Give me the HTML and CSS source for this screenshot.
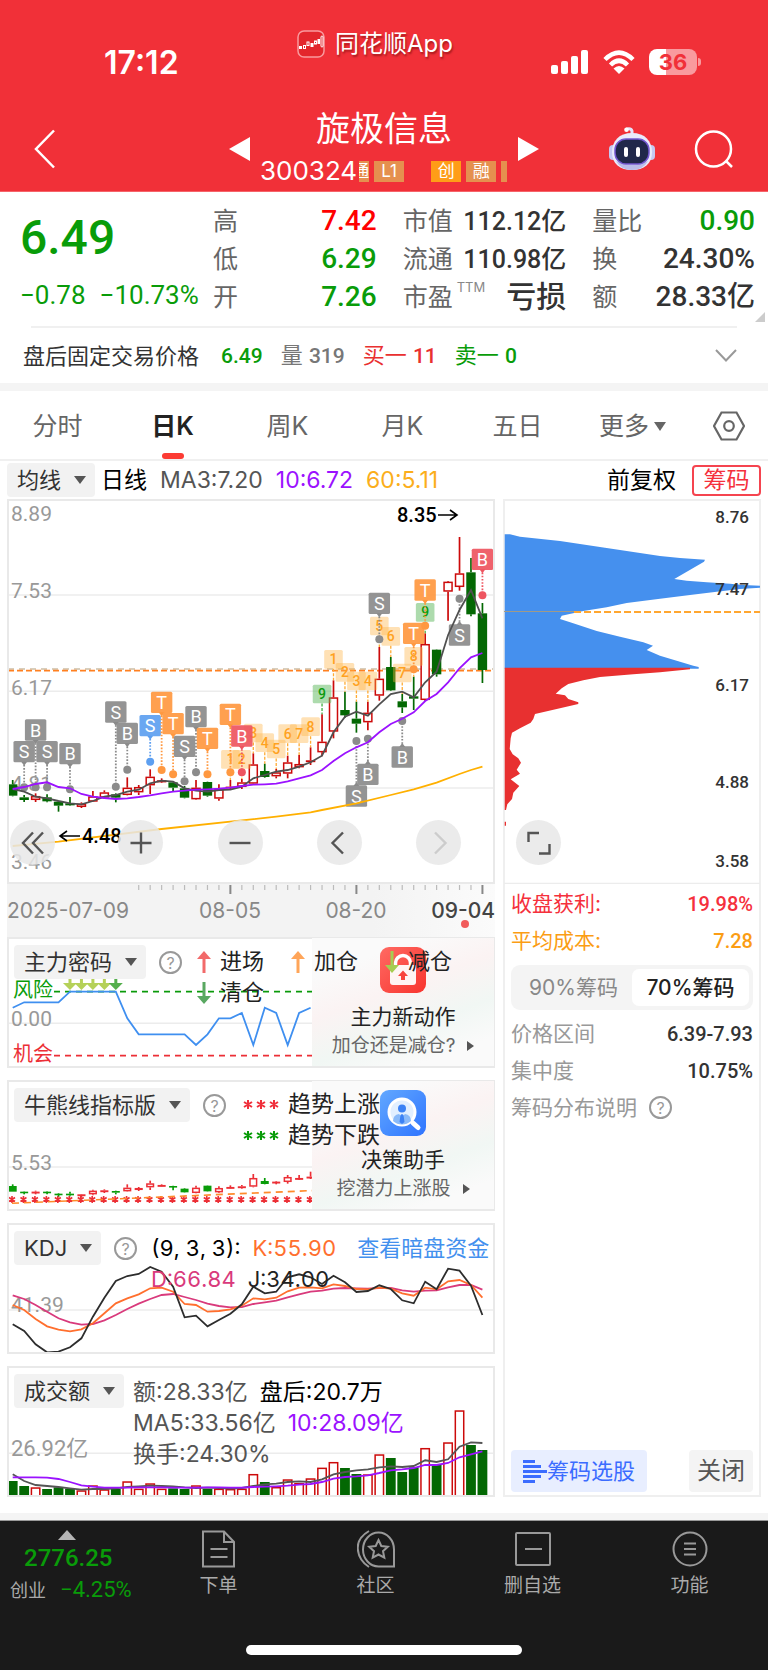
FILE: index.html
```html
<!DOCTYPE html>
<html lang="zh-CN">
<head>
<meta charset="utf-8">
<meta name="viewport" content="width=device-width, initial-scale=1">
<title>旋极信息 300324</title>
<link rel="stylesheet" href="styles.css">
</head>
<body>
<header class="top">
  <div class="status">
    <span class="clock">17:12</span>
    <span class="app">
      <svg class="app-logo" viewBox="0 0 28 28" aria-hidden="true"><rect x="1" y="1" width="26" height="26" rx="6" fill="#e3262c" stroke="#f99a9d" stroke-width="1.5"/><g fill="none" stroke="#fff" stroke-width="1"><rect x="2.500" y="16.500" width="2" height="2" fill="#fff"/><rect x="6.500" y="15.500" width="2" height="3"/><rect x="10" y="12" width="2" height="3.500"/><rect x="14" y="13.500" width="2" height="3" fill="#fff"/><rect x="17.500" y="11" width="2" height="3"/><rect x="21" y="9.500" width="1.500" height="4" fill="#fff"/><rect x="24" y="6" width="2" height="11" rx="1"/></g></svg>
      同花顺App
    </span>
    <span class="signals">
      <svg width="38" height="24" viewBox="0 0 38 24" fill="#fff" aria-hidden="true"><rect x="0" y="15" width="7" height="9" rx="2"/><rect x="10" y="11" width="7" height="13" rx="2"/><rect x="20" y="6" width="7" height="18" rx="2"/><rect x="30" y="0" width="7" height="24" rx="2"/></svg>
      <svg width="32" height="24" viewBox="0 0 32 24" aria-hidden="true"><g fill="none" stroke="#fff" stroke-width="4.500"><path d="M2 9.500Q16-4.500 30 9.500"/><path d="M7.500 15Q16 6.500 24.500 15"/></g><path d="M10.500 18.500Q16 13.500 21.500 18.500L16 24Z" fill="#fff"/></svg>
      <span class="battery">36</span>
    </span>
  </div>
  <div class="bar">
    <button class="plain back" aria-label="返回"><svg width="22" height="40" viewBox="0 0 22 40"><path d="M20 1.500 2 20l18 18.500" fill="none" stroke="#fff" stroke-width="2.500"/></svg></button>
    <div class="stock">
      <button class="plain" aria-label="上一只"><svg width="21" height="24" viewBox="0 0 21 24"><path d="M21 0v24L0 12z" fill="#fff"/></svg></button>
      <div class="ident">
        <h1>旋极信息</h1>
        <div class="code"><span>300324</span><span class="tags"><i class="tag cut-left">通</i><i class="tag">L1</i><i class="tag hot">创</i><i class="tag">融</i><i class="tag cut-right"></i></span></div>
      </div>
      <button class="plain" aria-label="下一只"><svg width="21" height="24" viewBox="0 0 21 24"><path d="M0 0v24l21-12z" fill="#fff"/></svg></button>
    </div>
    <div class="tools">
      <button class="plain" aria-label="智能助手"><svg width="46" height="44" viewBox="0 0 46 44"><path d="M23 8V4q-1-3-5-2" fill="none" stroke="#e4e4fa" stroke-width="3" stroke-linecap="round"/><circle cx="17.500" cy="2.800" r="2.300" fill="#fff"/><rect x="0" y="18" width="8" height="15" rx="4" fill="#c5c8f2"/><rect x="38" y="18" width="8" height="15" rx="4" fill="#c5c8f2"/><path d="M23 6C36 6 43 14 43 25c0 12-8 18-20 18S3 37 3 25C3 14 10 6 23 6Z" fill="#e9eafa"/><path d="M7 34q15 8 32 0-5 9-16 9T7 34Z" fill="#bbbde9"/><rect x="6" y="12" width="34" height="25" rx="11" fill="#20284a" stroke="#7357cf" stroke-width="1.500"/><rect x="15" y="20" width="4" height="10" rx="2" fill="#fff"/><rect x="27" y="20" width="4" height="10" rx="2" fill="#fff"/></svg></button>
      <button class="plain" aria-label="搜索"><svg width="40" height="40" viewBox="0 0 40 40" fill="none" stroke="#fff" stroke-width="2.500"><circle cx="19.500" cy="20" r="17.500"/><path d="m32 32 6 6"/></svg></button>
    </div>
  </div>
</header>

<main>
  <section class="quote">
    <div class="price"><strong>6.49</strong><span>−0.78</span><span>−10.73%</span></div>
    <dl class="stats">
      <div><dt>高</dt><dd class="up">7.42</dd></div>
      <div><dt>市值</dt><dd class="long">112.12亿</dd></div>
      <div><dt>量比</dt><dd class="down">0.90</dd></div>
      <div><dt>低</dt><dd class="down">6.29</dd></div>
      <div><dt>流通</dt><dd class="long">110.98亿</dd></div>
      <div><dt>换</dt><dd>24.30%</dd></div>
      <div><dt>开</dt><dd class="down">7.26</dd></div>
      <div><dt>市盈<sup>TTM</sup></dt><dd class="word">亏损</dd></div>
      <div><dt>额</dt><dd>28.33亿</dd></div>
    </dl>
    <span class="corner"></span>
  </section>
  <section class="after">
    <span>盘后固定交易价格</span><b class="down">6.49</b><span class="grey">量 <b>319</b></span><span class="buy">买一 <b>11</b></span><span class="down">卖一 <b>0</b></span>
    <button class="plain" aria-label="展开"><svg width="22" height="13" viewBox="0 0 22 13"><path d="m1 1 10 10.500L21 1" fill="none" stroke="#999" stroke-width="2"/></svg></button>
  </section>

  <nav class="tabs">
    <button class="plain">分时</button>
    <button class="plain active">日K</button>
    <button class="plain">周K</button>
    <button class="plain">月K</button>
    <button class="plain">五日</button>
    <button class="plain more">更多</button>
    <button class="plain" aria-label="设置"><svg width="32" height="30" viewBox="0 0 32 30" fill="none" stroke="#666" stroke-width="2.200"><path d="M8.500 1.500h15L31 15l-7.500 13.500h-15L1 15Z"/><circle cx="16" cy="15" r="4.800"/></svg></button>
  </nav>

  <div class="legend-bar">
    <label class="pick"><select aria-label="主图指标"><option>均线</option></select></label>
    <span class="black">日线</span><span class="ma3">MA3:7.20</span><span class="ma10">10:6.72</span><span class="ma60">60:5.11</span>
    <span class="black adj">前复权</span>
    <button class="chip-btn">筹码</button>
  </div>

  <div class="board">
    <div class="left">
      <div class="chart frame">
        <svg id="kline" viewBox="7 499 488 385" role="img" aria-label="日K线"></svg>
        <div class="round-row">
          <button class="round" aria-label="最左"><svg viewBox="0 0 24 24"><path d="M12 1.500 2 12l10 10.500M22 1.500 12 12l10 10.500"/></svg></button>
          <button class="round" aria-label="放大"><svg viewBox="0 0 24 24"><path d="M12 1.500v21M1.500 12h21"/></svg></button>
          <button class="round" aria-label="缩小"><svg viewBox="0 0 24 24"><path d="M1.500 12h21"/></svg></button>
          <button class="round" aria-label="左移"><svg viewBox="0 0 24 24"><path d="M16 1.500 5.500 12 16 22.500"/></svg></button>
          <button class="round off" aria-label="右移" disabled><svg viewBox="0 0 24 24"><path d="M8 1.500 18.500 12 8 22.500"/></svg></button>
        </div>
      </div>
      <svg id="dates" class="dates" viewBox="7 884 488 53" role="img" aria-label="日期轴"></svg>

      <section class="panel frame">
        <svg id="code" viewBox="7 938 488 131" role="img" aria-label="主力密码"></svg>
        <div class="panel-head">
          <label class="pick"><select aria-label="副图指标一"><option>主力密码</option></select></label>
          <button class="plain help" aria-label="说明">?</button>
          <div class="legend arrows">
            <span><svg viewBox="0 0 14 22"><path d="M5.500 22V8H0L7 0l7 8H8.500V22Z" fill="#f26a6a"/></svg>进场</span>
            <span><svg viewBox="0 0 14 22"><path d="M5.500 22V8H0L7 0l7 8H8.500V22Z" fill="#ffa559"/></svg>加仓</span>
            <span><svg viewBox="0 0 14 22"><path d="M5.500 0V14H0L7 22l7-8H8.500V0Z" fill="#a6cd52"/></svg>减仓</span>
            <span><svg viewBox="0 0 14 22"><path d="M5.500 0V14H0L7 22l7-8H8.500V0Z" fill="#59a861"/></svg>清仓</span>
          </div>
        </div>
        <a class="promo" href="#action">
          <svg class="promo-icon" viewBox="0 0 46 46"><defs><linearGradient id="r" x1="0" y1="0" x2="1" y2="1"><stop stop-color="#ff6a63"/><stop offset="1" stop-color="#f8342e"/></linearGradient></defs><rect width="46" height="46" rx="9" fill="url(#r)"/><path d="M15.500 19v-3a7.500 7.500 0 0 1 15 0v3" fill="none" stroke="#fff" stroke-width="3.500"/><path d="M10 18h26v17q0 3-3 3H13q-3 0-3-3Z" fill="#fff" opacity=".94"/><path d="M23 23.500 28 29h-3v4h-4v-4h-3Z" fill="#f8433d"/></svg>
          <b>主力新动作</b><span>加仓还是减仓?<i class="play"></i></span>
        </a>
      </section>

      <section class="panel frame">
        <svg id="trend" viewBox="7 1080 488 131" role="img" aria-label="牛熊线"></svg>
        <div class="panel-head">
          <label class="pick"><select aria-label="副图指标二"><option>牛熊线指标版</option></select></label>
          <button class="plain help" aria-label="说明">?</button>
          <div class="legend stars">
            <span><svg class="rise" viewBox="0 0 34 9"><path d="M4 0v9M0 2l8 5M8 2l-8 5M17 0v9M13 2l8 5M21 2l-8 5M30 0v9M26 2l8 5M34 2l-8 5"/></svg>趋势上涨</span>
            <span><svg class="fall" viewBox="0 0 34 9"><path d="M4 0v9M0 2l8 5M8 2l-8 5M17 0v9M13 2l8 5M21 2l-8 5M30 0v9M26 2l8 5M34 2l-8 5"/></svg>趋势下跌</span>
          </div>
        </div>
        <a class="promo" href="#assistant">
          <svg class="promo-icon" viewBox="0 0 46 46"><defs><linearGradient id="b" x1="0" y1="0" x2="1" y2="1"><stop stop-color="#62a8ff"/><stop offset="1" stop-color="#2f74ff"/></linearGradient></defs><rect width="46" height="46" rx="9" fill="url(#b)"/><path d="m33 33 5 4.500" stroke="#fff" stroke-width="5" stroke-linecap="round"/><circle cx="22" cy="22" r="13" fill="#e2efff" stroke="#fff" stroke-width="3"/><circle cx="22" cy="18.500" r="4" fill="#3c82f5"/><path d="M13 31q0-6 6-7l3 3 3-3q6 1 6 7-4 3.500-9 3.500T13 31Z" fill="#8abaf9"/><path d="m20.500 25 1.500-1 1.500 1 1 7-2.500 2-2.500-2Z" fill="#3c82f5"/></svg>
          <b>决策助手</b><span>挖潜力上涨股<i class="play"></i></span>
        </a>
      </section>

      <section class="panel frame">
        <svg id="kdj" viewBox="7 1223 488 131" role="img" aria-label="KDJ"></svg>
        <div class="panel-head">
          <label class="pick"><select aria-label="副图指标三"><option>KDJ</option></select></label>
          <button class="plain help" aria-label="说明">?</button>
          <div class="legend values">
            <span class="black">(9, 3, 3):</span><span class="k">K:55.90</span><a href="#fund">查看暗盘资金</a>
            <span class="d">D:66.84</span><span class="ink">J:34.00</span>
          </div>
        </div>
      </section>

      <section class="panel frame">
        <svg id="volume" viewBox="7 1365 488 131" role="img" aria-label="成交额"></svg>
        <div class="panel-head">
          <label class="pick"><select aria-label="副图指标四"><option>成交额</option></select></label>
          <div class="legend amounts">
            <p><span>额:28.33亿</span><span class="black">盘后:20.7万</span></p>
            <p><span>MA5:33.56亿</span><span class="ma10">10:28.09亿</span></p>
            <p><span>换手:24.30%</span></p>
          </div>
        </div>
      </section>
    </div>

    <aside class="chips">
      <div class="chart">
        <svg id="dist" viewBox="503 499 258 385" role="img" aria-label="筹码分布"></svg>
        <button class="round full" aria-label="全屏"><svg viewBox="0 0 24 24"><path d="M1.500 11V2H12M12 22.500h10.500V13"/></svg></button>
      </div>
      <div class="chip-info">
        <p class="gain"><span>收盘获利:</span><b>19.98%</b></p>
        <p class="cost"><span>平均成本:</span><b>7.28</b></p>
        <div class="segment">
          <label><input type="radio" name="range"><span>90%筹码</span></label>
          <label><input type="radio" name="range" checked><span>70%筹码</span></label>
        </div>
        <p><span>价格区间</span><b>6.39-7.93</b></p>
        <p><span>集中度</span><b>10.75%</b></p>
        <p class="note"><span>筹码分布说明</span><button class="plain help" aria-label="筹码分布说明">?</button></p>
      </div>
      <div class="chip-actions">
        <button class="choose"><svg width="24" height="23" viewBox="0 0 24 23"><path d="M0 1.500h12M0 6.500h18M0 11.500h24M0 16.500h18M0 21.500h12" stroke="#3b6cff" stroke-width="2.800"/></svg>筹码选股</button>
        <button class="close">关闭</button>
      </div>
    </aside>
  </div>
</main>

<footer class="dock">
  <nav class="dock-row">
    <a class="index" href="#index"><i class="tri"></i><b>2776.25</b><span>创业 <em>−4.25%</em></span></a>
    <a href="#order"><svg viewBox="0 0 38 38"><path d="M3 1.500h21L34 12v24.500H3ZM24 1.500V12h10M10.500 19h17M10.500 27h17"/></svg>下单</a>
    <a href="#club"><svg viewBox="0 0 38 38"><path d="M37 36.500V19.500A15.500 17 0 1 0 21.500 36.500ZM12 1Q0 8 .800 19T12 37M21.500 10l2.800 6 6.500.800-4.800 4.400 1.300 6.500-5.800-3.200-5.800 3.200 1.300-6.500-4.800-4.400 6.500-.800Z"/></svg>社区</a>
    <a href="#remove"><svg viewBox="0 0 38 38"><rect x="2" y="3" width="34" height="32" rx="1"/><path d="M11 19h17"/></svg>删自选</a>
    <a href="#more"><svg viewBox="0 0 38 38"><circle cx="19" cy="19" r="16.500"/><path d="M13 13.500h12M13 19h12M13 24.500h12"/></svg>功能</a>
  </nav>
  <i class="home"></i>
</footer>
<script src="charts.js"></script>
</body>
</html>
```

FILE: styles.css
```css
* { box-sizing: border-box; }
body {
  margin: 0;
  background: #fff;
  color: #333;
  font-family: Inter, "Noto Sans CJK SC", sans-serif;
  font-size: 22px;
  line-height: 1;
}
h1, p, dl, dd { margin: 0; }
i, em { font-style: normal; }
a { text-decoration: none; color: inherit; }
button, select, input { font: inherit; color: inherit; }
.plain { border: 0; padding: 0; background: none; display: inline-flex; align-items: center; justify-content: center; }
svg { display: block; }
.up { color: #f00; }
.down { color: #099c09; }

/* header */
.top { background: #f13038; color: #fff; border-bottom: 1px solid #f6646a; }
.status { display: grid; grid-template-columns: 1fr auto 1fr; height: 96px; padding: 26px 71px 0; }
.clock { font-size: 32px; font-weight: 600; line-height: 74px; padding-left: 33px; }
.app { display: flex; gap: 10px; align-items: center; height: 36px; font-size: 24px; text-shadow: 1px 2px 2px rgba(90, 0, 0, .5); margin-right: 18px; }
.app-logo { width: 28px; height: 28px; }
.signals { display: flex; gap: 14px; justify-content: flex-end; align-items: center; height: 72px; }
.battery { position: relative; width: 48px; height: 26px; border-radius: 8px; background: linear-gradient(90deg, #fff 36%, #f99a9e 36%); color: #f13038; font-size: 22px; font-weight: 700; line-height: 26px; text-align: center; }
.battery::after { content: ""; position: absolute; right: -4px; top: 9px; width: 3px; height: 8px; border-radius: 0 3px 3px 0; background: #f99a9e; }
.bar { display: grid; grid-template-columns: 1fr auto 1fr; height: 95px; padding: 0 34px; }
.back { justify-self: start; height: 105px; }
.stock { display: flex; align-items: center; gap: 10px; height: 105px; }
.ident { width: 248px; align-self: start; padding-top: 14px; }
h1 { font-size: 34px; font-weight: 400; line-height: 38px; margin-bottom: 9px; text-align: center; }
.code { display: flex; align-items: center; font-size: 26px; line-height: 28px; overflow: hidden; }
.tags { display: flex; gap: 5px; flex: 1; margin-left: 2px; }
.tag { width: 30px; height: 21px; flex: none; background: #e5904f; font-size: 17px; line-height: 21px; text-align: center; }
.cut-left { width: 10px; overflow: hidden; direction: rtl; }
.hot { background: #ff9d17; margin-left: 22px; }
.cut-right { width: 6px; }
.tools { display: flex; gap: 39px; justify-content: flex-end; height: 105px; align-items: center; }

/* quote */
.quote { position: relative; display: grid; grid-template-columns: 193px 1fr; margin: 0 13px 0 20px; padding-top: 10px; height: 134px; }
.price { display: flex; flex-wrap: wrap; align-content: flex-start; column-gap: 14px; color: #099c09; font-family: Roboto, sans-serif; font-size: 26px; }
.price span { white-space: nowrap; line-height: 30px; }
.price strong { flex: 0 0 100%; font-size: 48px; font-weight: 500; line-height: 72px; margin-bottom: 6px; }
.stats { display: grid; grid-template-columns: 163fr 163fr 162fr; column-gap: 26px; grid-auto-rows: 38px; }
.stats div { display: flex; justify-content: space-between; align-items: center; font-size: 25px; }
dt { color: #666; position: relative; white-space: nowrap; }
dt sup { position: absolute; left: 54px; top: -4px; font-size: 13px; line-height: 13px; color: #888; }
dd { font-family: Roboto, "Noto Sans CJK SC", sans-serif; font-weight: 500; font-size: 28px; white-space: nowrap; }
dd.long { font-size: 25px; }
dd.word { font-size: 30px; }
.corner { position: absolute; right: -10px; bottom: 4px; border-style: solid; border-width: 0 0 10px 10px; border-color: transparent transparent #ccc transparent; }
.after { display: flex; align-items: center; gap: 18px; height: 57px; margin: 0 31px; border-top: 2px solid #f0f0f0; font-size: 22px; white-space: nowrap; }
.after > span:first-child { margin: 0 4px 0 -8px; }
.after b { font: 500 21px Roboto, sans-serif; }
.after button { margin-left: auto; }
.grey { color: #777; }
.buy { color: #e93030; }

/* tabs */
.tabs { display: grid; grid-template-columns: repeat(6, 115fr) 78fr; height: 78px; border-top: 8px solid #f4f4f4; border-bottom: 2px solid #f0f0f0; color: #666; font-size: 25px; }
.tabs button { position: relative; padding-top: 2px; }
.tabs .active { color: #222; font-weight: 600; }
.active::after { content: ""; position: absolute; bottom: 0; width: 22px; height: 6px; border-radius: 3px; background: #fc3b33; }
.more { gap: 5px; }
.more::after { content: ""; border: 6px solid transparent; border-top: 9px solid #666; border-bottom: 0; }

/* dropdown */
.pick { position: relative; display: inline-block; flex: none; }
.pick select { appearance: none; border: 0; margin: 0; height: 34px; padding: 0 33px 0 10px; border-radius: 4px; background: #f2f2f2; font-size: 22px; line-height: 34px; color: #333; display: block; }
.pick::after { content: ""; position: absolute; right: 9px; top: 13px; border: 6px solid transparent; border-top: 8px solid #555; border-bottom: 0; pointer-events: none; }
.values { font-variant-numeric: tabular-nums; }
.legend-bar { display: flex; align-items: center; gap: 13px; padding: 0 7px; height: 38px; font-size: 23px; white-space: nowrap; }
.legend-bar .pick { margin-right: -7px; }
.ink { color: #222; }
.black { color: #000; }
.ma3 { color: #555; }
.ma10 { color: #9b12ff; }
.ma60 { color: #fbae1b; }
.adj { margin: 0 3px 0 auto; }
.chip-btn { border: 2px solid #f5444f; border-radius: 4px; background: #fff; color: #f5303c; width: 69px; height: 31px; padding: 0; line-height: 27px; }

/* board */
.board { display: grid; grid-template-columns: 488fr 258fr; gap: 8px; padding: 0 7px 16px; border-bottom: 7px solid #f4f4f4; }
.board svg text { font-family: Roboto, "Noto Sans CJK SC", sans-serif; }
.frame { position: relative; outline: 2px solid #e9e9e9; outline-offset: -2px; }
.chart { position: relative; }
.chart > svg, .panel > svg, .dates { width: 100%; }
.dates { background: linear-gradient(90deg, #f3f3f3 75%, #fbfbfb); }
.round-row { position: absolute; left: 3px; right: 34px; bottom: 19px; display: flex; justify-content: space-between; }
.round { width: 45px; height: 45px; border: 0; border-radius: 50%; padding: 0; display: flex; align-items: center; justify-content: center; background: rgba(232, 232, 232, .85); }
.round:nth-child(2) { margin-left: 9px; }
.round svg { width: 24px; height: 24px; fill: none; stroke: #555; stroke-width: 2.4; }
.round.off svg { stroke: #ccc; }
.chart .full { position: absolute; left: 13px; bottom: 19px; margin: 0; }
.panel { margin-bottom: 12px; }
.panel:last-child { margin-bottom: 0; }
.panel-head { position: absolute; z-index: 2; left: 7px; right: 0; top: 8px; display: flex; align-items: flex-start; pointer-events: none; }
.help { width: 23px; height: 23px; border: 2px solid #999; border-radius: 50%; color: #999; font-size: 16px; flex: none; }
.panel-head .help { margin: 6px 0 0 13px; }
.legend { line-height: 31px; flex: 1; }
.arrows { display: grid; grid-template-columns: repeat(3, 94px); margin-left: 15px; padding-top: 1px; }
.legend span { white-space: nowrap; }
.arrows span { display: flex; align-items: center; gap: 9px; color: #222; }
.arrows svg { width: 14px; height: 22px; }
.stars { margin-left: 18px; padding-top: 1px; color: #222; font-size: 23px; }
.stars span { display: flex; align-items: center; gap: 10px; }
.stars svg { width: 34px; height: 9px; stroke-width: 2; overflow: visible; }
.rise { stroke: #f0303c; }
.fall { stroke: #099c09; }
.values { display: flex; flex-wrap: wrap; column-gap: 12px; margin-left: 14px; padding-top: 2px; }
.values a { color: #4390ee; margin-left: 9px; white-space: nowrap; }
.k { color: #ff6f2e; }
.d { color: #d93a7c; }
.amounts { margin-left: 9px; padding-top: 3px; color: #555; font-size: 23px; }
.amounts p { display: flex; gap: 12px; }
.promo { position: absolute; z-index: 1; top: 1px; bottom: 2px; right: 1px; width: 182px; padding-top: 9px; display: flex; flex-direction: column; align-items: center; background: linear-gradient(160deg, #fafafa 20%, #fbf3f3 42%, #f1f7f4 65%, #fafafa 85%); white-space: nowrap; }
.promo-icon { width: 46px; height: 46px; }
.promo b { font-size: 21px; font-weight: 400; line-height: 28px; margin-top: 10px; color: #222; }
.promo span { display: flex; align-items: center; gap: 12px; font-size: 19px; line-height: 30px; color: #666; }
.play { border: 5px solid transparent; border-left: 7px solid #555; border-right: 0; }

/* chip distribution */
.chips { display: flex; flex-direction: column; outline: 2px solid #efefef; outline-offset: -2px; }
.chip-info { padding: 1px 8px 0; font-size: 21px; }
.chip-info p { display: flex; justify-content: space-between; align-items: center; height: 37px; color: #999; }
.chip-info b { font: 500 20px Roboto, sans-serif; color: #333; }
.chip-info .gain, .chip-info .gain b { color: #f5303c; }
.chip-info .cost, .chip-info .cost b { color: #fb9d14; }
.chip-info .note { justify-content: flex-start; gap: 12px; }
.segment { display: grid; grid-template-columns: 1fr 117px; height: 45px; margin: 6px 0 5px; padding: 4px; border-radius: 9px; background: #f4f4f4; color: #888; }
.segment label { position: relative; display: flex; align-items: center; justify-content: center; white-space: nowrap; }
.segment input { position: absolute; opacity: 0; margin: 0; }
.segment label:has(:checked) { background: #fff; border-radius: 7px; color: #222; font-weight: 500; }
.chip-actions { display: flex; justify-content: space-between; margin: auto 8px 5px; }
.chip-actions button { display: flex; align-items: center; border: 0; border-radius: 4px; height: 42px; }
.choose { background: #e8eeff; color: #3b6cff; padding: 0 12px; font-size: 22px; }
.close { background: #f4f4f4; color: #555; padding: 0 8px; font-size: 24px; }

/* dock */
.dock { background: #1a1a1a; border-top: 1px solid #999; color: #aaa; padding-bottom: 15px; }
.dock-row { display: grid; grid-template-columns: 140px repeat(4, 1fr); height: 124px; font-size: 19px; }
.dock-row a { display: flex; flex-direction: column; align-items: center; padding-top: 9px; gap: 8px; }
.dock-row svg { width: 38px; height: 38px; fill: none; stroke: #999; stroke-width: 2; }
.dock-row .index { align-items: flex-start; padding-left: 10px; gap: 0; font-size: 18px; white-space: nowrap; }
.index .tri { margin-left: 48px; border: 9px solid transparent; border-bottom: 10px solid #b5b5b5; border-top: 0; }
.index b { margin-left: 14px; font: 500 24px/37px Roboto, sans-serif; color: #099c09; }
.index em { font: 400 22px Roboto, sans-serif; color: #099c09; margin-left: 9px; }
.home { display: block; width: 276px; max-width: 60%; height: 10px; border-radius: 5px; background: #fff; margin: 0 auto; }
```

FILE: charts.js
```js
const NS = 'http://www.w3.org/2000/svg';
const RED = '#cc0a0a', GREEN = '#036803';
const STEP = 11.457, FIRST = 12.7;
const px = i => FIRST + STEP * i;

function add(svg, tag, attrs, text) {
  const el = document.createElementNS(NS, tag);
  for (const k in attrs) el.setAttribute(k, attrs[k]);
  if (text !== undefined) el.textContent = text;
  svg.appendChild(el);
  return el;
}
const rule = (svg, x1, x2, y, stroke = '#ececec', more = {}) =>
  add(svg, 'line', { x1, x2, y1: y, y2: y, stroke, 'stroke-width': 1.5, ...more });
const label = (svg, x, y, text, fill = '#999', size = 21, more = {}) =>
  add(svg, 'text', { x, y, fill, 'font-size': size, ...more }, text);

// Values are given in thirds of a pixel below the plot's origin.
const scale = origin => v => origin + v / 3;
const series = (svg, values, y, stroke, width = 1.6) =>
  add(svg, 'polyline', { points: values.map((v, i) => px(i).toFixed(1) + ',' + y(v).toFixed(1)).join(' '), fill: 'none', stroke, 'stroke-width': width });

function candles(svg, rows, y, half, red, green) {
  rows.forEach(([c, hi, top, bot, lo], i) => {
    const x = px(i), stroke = c === 'r' ? red : green;
    const stem = (a, b) => b > a && add(svg, 'line', { x1: x, x2: x, y1: y(a), y2: y(b), stroke, 'stroke-width': 1.7 });
    stem(hi, top); stem(bot, lo);
    const h = Math.max((bot - top) / 3, 1.6);
    if (c === 'r') add(svg, 'rect', { x: x - half + .7, y: y(top) + .7, width: half * 2 - 1.4, height: Math.max(h - 1.4, .4), fill: '#fff', stroke, 'stroke-width': 1.5 });
    else add(svg, 'rect', { x: x - half, y: y(top), width: half * 2, height: h, fill: stroke });
  });
}

(function kline() {
  const s = document.getElementById('kline'), y = scale(495);
  [300, 589, 879].forEach(v => rule(s, 8, 494, y(v)));
  [['8.89', 521], ['7.53', 598], ['6.17', 695], ['4.81', 791], ['3.46', 869]].forEach(([t, v]) => label(s, 11, v, t));
  rule(s, 8, 494, 669, '#cdbfa6', { 'stroke-dasharray': '6 5' });
  rule(s, 8, 494, 670.7, '#ff8020', { 'stroke-dasharray': '6 3', 'stroke-width': 1.8 });

  const rows = [
    ['g',855,868,902,904],['g',900,907,915,921],['r',895,903,915,921],['g',898,907,919,922],['g',918,920,932,950],['g',906,925,931,932],
    ['r',922,926,936,939],['r',888,904,920,921],['r',886,892,908,912],['g',895,898,908,922],['r',847,878,900,901],['r',870,876,892,900],
    ['r',823,845,871,897],['r',850,856,862,864],['g',860,862,878,888],['g',873,880,908,910],['r',855,878,913,914],['g',860,861,902,905],
    ['r',868,882,911,917],['r',855,875,879,882],['r',852,862,876,882],['r',775,808,866,868],['g',806,828,846,848],['r',822,832,844,850],
    ['r',782,802,836,850],['r',780,807,817,820],['r',757,796,801,810],['r',658,740,772,784],['r',556,607,710,730],['g',590,645,661,668],
    ['g',620,671,686,713],['r',620,653,682,706],['r',456,551,602,617],['g',486,516,586,588],['g',597,619,637,654],['g',545,604,611,645],
    ['r',415,447,615,618],['g',463,464,538,545],['r',258,260,290,377],['r',126,235,276,287],['g',189,232,358,364],['g',324,355,525,564]];
  candles(s, rows, y, 4.7, RED, GREEN);

  const day = [[19,'1',793],[20,'2',793],[21,'3',714],[22,'4',743],[23,'5',762],[24,'6',716],[25,'7',716],[26,'8',695],[27,'9',597],
    [28,'1',493],[29,'2',532],[30,'3',558],[31,'4',558],[32,'5',393],[33,'6',424],[34,'7',534],[35,'8',484],[36,'9',352]];
  day.forEach(([i, t, v]) => {
    const nine = t === '9', x = px(i), c = nine ? '#3fae3f' : '#ffab33';
    add(s, 'rect', { x: x - 9.3, y: y(v) - 9.3, width: 18.6, height: 18.6, rx: 1.5, fill: nine ? '#5cb85c' : '#ffb347', opacity: nine ? .5 : .4 });
    add(s, 'line', { x1: x, x2: x, y1: y(v) + 9.5, y2: y(rows[i][1]), stroke: c, 'stroke-width': 1.3, 'stroke-dasharray': '3 1.500' });
    label(s, x, y(v) + 5, t, nine ? '#0c9a0c' : '#ffa21f', 14, { 'text-anchor': 'middle', 'font-weight': 500 });
  });

  const grey = '#8b8b8b', orange = '#ff9840', rose = '#ee5560', blue = '#5d9ff0';
  [[1,'S',770,877,grey],[2,'B',705,877,grey],[3,'S',770,877,grey],[5,'B',776,883,grey],[9,'S',651,875,grey],[10,'B',715,824,grey],
   [12,'S',692,800,blue],[13,'T',622,825,orange],[14,'T',686,838,orange],[15,'S',754,859,grey],[16,'B',665,832,grey],[17,'T',730,838,orange],
   [19,'T',658,832,orange],[20,'B',723,832,rose],[32,'S',325,433,grey],[36,'T',285,392,orange],[35,'T',415,523,orange],[41,'B',193,301,rose],
   [39,'S',420,311,grey],[30,'S',903,738,grey],[31,'B',838,731,grey],[34,'B',786,678,grey]].forEach(([i, t, v, dot, c]) => {
    const x = px(i), dir = dot > v ? 1 : -1;
    add(s, 'line', { x1: x, x2: x, y1: y(v) + dir * 10, y2: y(dot), stroke: c, 'stroke-width': 1.8, 'stroke-dasharray': '1.600 1.600' });
    add(s, 'circle', { cx: x, cy: y(dot), r: 4, fill: c });
    add(s, 'path', { d: `M${x - 3} ${y(v) + dir * 10}h6l-3 ${dir * 4}Z`, fill: c });
    add(s, 'rect', { x: x - 10.7, y: y(v) - 10.7, width: 21.4, height: 21.4, rx: 1.5, fill: c, opacity: .92 });
    add(s, 'text', { x, y: y(v) + 6.5, fill: '#fff', 'font-size': 18, 'text-anchor': 'middle' }, t);
  });

  series(s, [882,890,905,910,918,925,928,918,905,900,890,884,865,857,860,880,887,890,885,884,875,850,840,830,825,815,802,782,712,665,650,662,628,597,590,607,562,530,420,345,285,370], y, '#505050', 1.8);
  series(s, [882,876,867,862,876,880,897,905,909,912,910,906,901,895,890,887,884,883,881,878,873,869,868,866,859,850,841,825,798,775,757,742,712,687,671,652,618,597,562,520,487,474], y, '#9b12ff', 1.8);
  const slow = [[0,1053],[4,1040],[13,1002],[20,976],[23,965],[26,952],[27,945],[30,925],[33,900],[35,883],[37,863],[39,837],[40,825],[41,815]];
  add(s, 'polyline', { points: slow.map(([i, v]) => px(i) + ',' + y(v)).join(' '), fill: 'none', stroke: '#ffb000', 'stroke-width': 1.8 });

  label(s, 397, 522, '8.35', '#000', 20, { 'font-weight': 500 });
  label(s, 82, 843, '4.48', '#000', 20, { 'font-weight': 500 });
  add(s, 'path', { d: 'M438 515h19m-7-5 7 5-7 5M80 836H60m7-5-7 5 7 5', fill: 'none', stroke: '#000', 'stroke-width': 1.6 });
})();

(function dates() {
  const s = document.getElementById('dates');
  for (let i = 11; i < 42; i++) {
    const major = [19, 30, 41].includes(i);
    add(s, 'line', { x1: px(i), x2: px(i), y1: 885, y2: major ? 894 : 890, stroke: major ? '#888' : '#bbb', 'stroke-width': major ? 2 : 1.2 });
  }
  const inter = { style: 'font-family: Inter, sans-serif' };
  label(s, 7, 918, '2025-07-09', '#888', 21, inter);
  label(s, 230, 918, '08-05', '#888', 21, { ...inter, 'text-anchor': 'middle' });
  label(s, 356, 918, '08-20', '#888', 21, { ...inter, 'text-anchor': 'middle' });
  label(s, 495, 918, '09-04', '#444', 21, { ...inter, 'text-anchor': 'end', 'font-weight': 500 });
  add(s, 'circle', { cx: 465, cy: 924, r: 4, fill: '#f15b5b' });
})();

(function code() {
  const s = document.getElementById('code'), y = scale(930);
  rule(s, 8, 494, y(283));
  label(s, 11, 1027, '0.00');
  rule(s, 54, 312, y(188), '#0a9a0a', { 'stroke-dasharray': '6 5', 'stroke-width': 1.8 });
  rule(s, 54, 312, y(380), '#ec2f36', { 'stroke-dasharray': '6 5', 'stroke-width': 1.8 });
  label(s, 13, 998, '风险', '#099c09', 20);
  label(s, 13, 1062, '机会', '#ec2f36', 20);
  [5, 6, 7, 8, 9].forEach(i => {
    const x = px(i);
    add(s, 'path', { d: `M${x - 1.5} 971v13h-5.500l7 7 7-7h-5.500v-13Z`, fill: i === 9 ? '#4cab45' : '#b1cf50', opacity: .95 });
  });
  series(s, [236,220,220,220,220,188,188,188,188,188,268,316,316,316,316,316,348,316,268,268,252,348,236,252,348,252,236], y, '#3f8ff0', 1.8);
})();

(function trend() {
  const s = document.getElementById('trend'), y = scale(1075);
  rule(s, 8, 494, y(276));
  label(s, 11, 1170, '5.53');
  candles(s, [['g',328,333,350,350],['g',349,350,353,358],['r',347,350,353,358],['g',349,350,353,358],['g',354,356,360,366],['g',350,356,361,364],
    ['r',357,358,362,368],['r',344,347,358,361],['r',343,346,348,354],['g',347,348,353,358],['r',328,338,349,350],['r',336,339,345,348],
    ['r',317,325,337,345],['r',328,330,332,334],['g',332,333,336,346],['g',339,341,352,353],['r',332,338,354,355],['g',331,332,349,350],
    ['r',334,339,352,354],['r',331,336,338,340],['r',330,334,336,341],['r',297,309,335,337],['g',309,318,327,328],['r',318,320,322,328],
    ['r',300,306,321,326],['r',300,309,311,315],['r',290,305,308,312]], y, 4, '#ec2f36', '#099c09');
  for (let i = 0; i < 27; i++) {
    const x = px(i) - .7;
    add(s, 'path', { d: `M${x} 1196v7M${x - 3} 1197.500l6 4M${x + 3} 1197.500l-6 4`, stroke: '#ec2f36', 'stroke-width': 1.6 });
  }
  add(s, 'line', { x1: 12, y1: 1203.3, x2: 312, y2: 1190.6, stroke: '#ff8a2a', 'stroke-width': 1.6, 'stroke-dasharray': '7 5' });
})();

(function kdj() {
  const s = document.getElementById('kdj'), y = scale(1215);
  rule(s, 8, 494, y(285));
  label(s, 11, 1312, '41.39');
  series(s, [241,252,270,290,310,322,329,327,316,300,282,266,252,240,237,246,255,266,273,277,276,267,262,257,247,238,230,227,221,219,220,221,219,219,226,230,227,226,217,210,210,224], y, '#d93a7c', 1.8);
  series(s, [270,285,312,334,344,349,343,325,295,265,250,238,220,218,230,267,270,290,288,283,272,250,253,248,229,218,217,220,208,213,222,223,218,221,235,242,218,223,199,195,210,248], y, '#ff6f2e', 1.8);
  series(s, [328,348,388,412,410,397,370,305,248,198,183,177,156,170,215,307,302,334,315,296,268,215,235,230,187,178,187,207,182,202,231,228,211,222,256,265,200,223,161,167,212,300], y, '#2d2d2d', 1.8);
})();

(function volume() {
  const s = document.getElementById('volume'), y = scale(1360);
  rule(s, 8, 494, y(277));
  label(s, 11, 1455, '26.92亿', '#999', 22);
  const tops = 'g360 g375 r379 g384 g379 g383 r388 r373 r385 g384 r361 r383 r367 r383 g382 g384 r373 g384 r383 r384 r383 r339 g363 r378 r355 r366 r352 r320 r303 g321 g339 r340 r280 g291 g333 g319 r261 g310 r244 r148 g252 g267';
  candles(s, tops.split(' ').map(t => [t[0], +t.slice(1), +t.slice(1), 408, 408]), y, 4.9, RED, GREEN);
  series(s, [340,360,372,375,378,382,386,384,384,382,378,376,374,375,376,379,381,380,381,383,381,375,370,368,363,361,363,355,340,333,328,325,319,316,318,315,298,303,295,257,244,246], y, '#555', 1.8);
  series(s, [349,349,349,350,354,363,373,377,380,380,380,379,379,379,380,380,380,379,379,380,380,378,377,376,374,371,369,363,353,348,346,343,336,328,325,321,312,312,306,289,280,271], y, '#9b12ff', 1.8);
})();

(function dist() {
  const s = document.getElementById('dist');
  const area = (raw, fill) => add(s, 'polygon', { fill, points: raw.split(' ').map(p => { const [a, b] = p.split(','); return (500 + a / 3).toFixed(1) + ',' + (495 + b / 3).toFixed(1); }).join(' ') });
  rule(s, 504, 760, 883.5);
  area('14,118 30,118 60,125 180,138 315,158 440,177 480,183 540,189 615,194 612,200 523,252 560,257 620,262 690,266 730,270 780,272 780,278 720,282 650,290 570,300 480,311 380,324 320,337 250,348 185,362 180,372 215,383 290,408 360,425 430,442 459,452 440,465 480,482 540,500 580,512 596,516 596,521 14,521', '#4590ee');
  area('14,518 570,518 570,523 480,532 400,538 300,546 250,556 205,567 185,580 167,596 195,601 205,612 235,622 235,627 170,642 105,657 100,672 92,683 60,700 36,713 32,730 29,762 38,778 55,790 63,803 50,824 60,836 32,853 58,873 40,893 36,912 22,928 18,945 14,945', '#e83030');
  area('14,980 18,980 18,992 14,992', '#e83030');
  rule(s, 504, 574, 611.5, '#a09a88', { 'stroke-width': 1.2 });
  rule(s, 574, 760, 612, '#ffa630', { 'stroke-width': 2, 'stroke-dasharray': '7 3' });
  [['8.76', 523], ['7.47', 595], ['6.17', 691], ['4.88', 788], ['3.58', 867]].forEach(([t, v]) =>
    label(s, 749, v, t, '#333', 17, { 'text-anchor': 'end', 'font-weight': 500 }));
})();
```
